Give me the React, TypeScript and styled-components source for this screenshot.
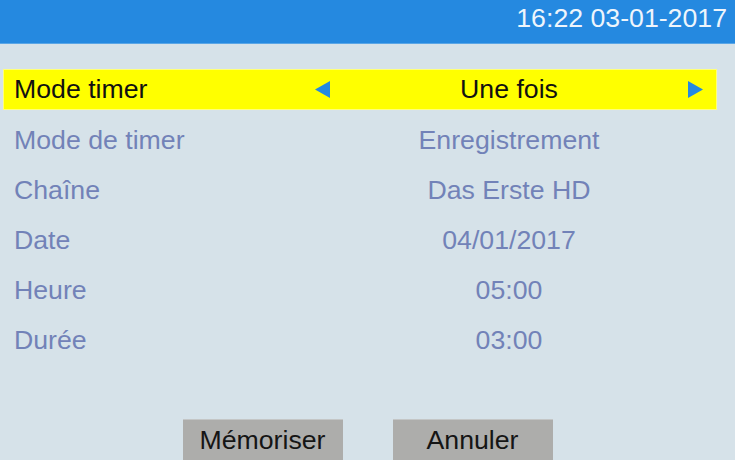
import React from 'react';
import styled, { createGlobalStyle } from 'styled-components';

const GlobalStyle = createGlobalStyle`
    html, body {
        margin: 0;
        padding: 0;
        background: #d6e2e9;
    }
    * {
        box-sizing: border-box;
    }
`;

interface Field {
    label: string;
    value: string;
}

const fields: Field[] = [
    { label: 'Mode de timer', value: 'Enregistrement' },
    { label: 'Chaîne', value: 'Das Erste HD' },
    { label: 'Date', value: '04/01/2017' },
    { label: 'Heure', value: '05:00' },
    { label: 'Durée', value: '03:00' },
];

const Arrow = ({ dir }: { dir: 'left' | 'right' }) => (
    <svg width="15" height="17" viewBox="0 0 15 17">
        {dir === 'left'
            ? <polygon points="15,0 15,17 0,8.5" fill="#2589e0" />
            : <polygon points="0,0 0,17 15,8.5" fill="#2589e0" />}
    </svg>
);

export default function App() {
    return (<>
        <GlobalStyle />
        <Screen>
            <TopBar>
                <Clock>16:22 03-01-2017</Clock>
            </TopBar>

            <List>
                <Row selected>
                    <Label selected>Mode timer</Label>
                    <ArrowCell><Arrow dir="left" /></ArrowCell>
                    <Value selected>Une fois</Value>
                    <ArrowCell><Arrow dir="right" /></ArrowCell>
                </Row>
                {fields.map(f =>
                    <Row key={f.label}>
                        <Label>{f.label}</Label>
                        <ArrowCell />
                        <Value>{f.value}</Value>
                        <ArrowCell />
                    </Row>
                )}
            </List>

            <Buttons>
                <Button>Mémoriser</Button>
                <Button>Annuler</Button>
            </Buttons>
        </Screen>
    </>);
}

const Screen = styled.div`
    width: 735px;
    height: 460px;
    overflow: hidden;
    display: flex;
    flex-direction: column;
    background: #d6e2e9;
    font-family: "Liberation Sans", Arial, sans-serif;
    font-size: 26.7px;
`;

const TopBar = styled.div`
    height: 44px;
    flex-shrink: 0;
    background: #2589e0;
    border-bottom: 1px solid #5aa6e6;
    display: flex;
    justify-content: flex-end;
    padding-right: 8px;
`;

const Clock = styled.span`
    color: #eef5fc;
    line-height: 36px;
`;

const List = styled.div`
    display: flex;
    flex-direction: column;
    padding-top: 21px;
`;

const Row = styled.div<{ selected?: boolean }>`
    height: ${p => p.selected ? '41px' : '50px'};
    margin: ${p => p.selected ? '4px 18px 5px 3px' : '0 18px 0 3px'};
    display: grid;
    grid-template-columns: 301px 15px 1fr 15px;
    align-items: center;
    padding: 0 13px 0 10px;
    background: ${p => p.selected ? '#ffff00' : 'transparent'};
    border: 1px solid ${p => p.selected ? '#ffff7a' : 'transparent'};
`;

const Label = styled.span<{ selected?: boolean }>`
    color: ${p => p.selected ? '#111111' : '#7282b8'};
    white-space: nowrap;
`;

const Value = styled.span<{ selected?: boolean }>`
    color: ${p => p.selected ? '#111111' : '#7282b8'};
    text-align: center;
    white-space: nowrap;
`;

const ArrowCell = styled.span`
    display: flex;
    align-items: center;
`;

const Buttons = styled.div`
    display: flex;
    justify-content: center;
    gap: 50px;
    margin-top: 54px;
`;

const Button = styled.div`
    width: 160px;
    height: 42px;
    background: #adadab;
    border-top: 1px solid #c4c6c6;
    color: #151515;
    display: flex;
    justify-content: center;
    align-items: center;
`;
